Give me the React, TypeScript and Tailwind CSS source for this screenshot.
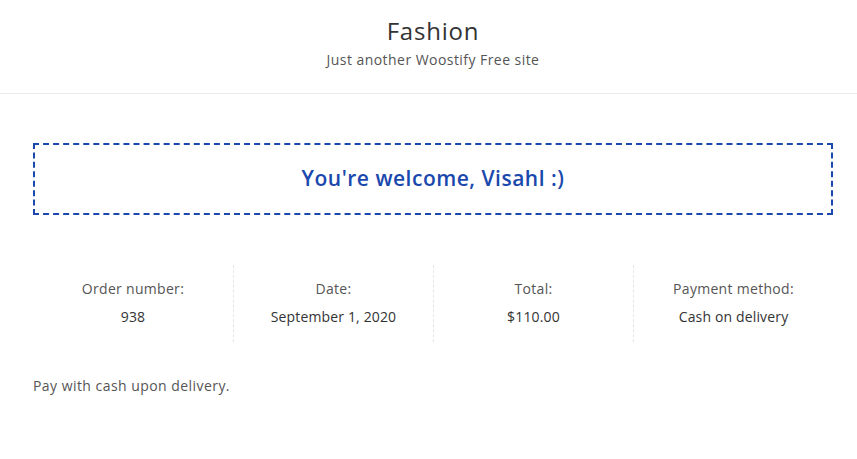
import React from 'react';

const details = [
  { label: 'Order number:', value: '938' },
  { label: 'Date:', value: 'September 1, 2020' },
  { label: 'Total:', value: '$110.00' },
  { label: 'Payment method:', value: 'Cash on delivery' },
];

export default function App() {
  return (
    <div className="min-h-screen bg-white font-['Open_Sans',sans-serif] text-[#333]">
      <header className="border-b border-[#eaeaea] pt-[15px] pb-[22px]">
        <div className="ml-[33px] w-[800px] text-center">
          <h1 className="text-[24px] leading-[32px] tracking-[0.8px] text-[#333]">Fashion</h1>
          <p className="mt-[2px] text-[14px] leading-[22px] tracking-[0.45px] text-[#555]">Just another Woostify Free site</p>
        </div>
      </header>

      <main className="px-[33px] pt-[49px]">
        <div className="flex h-[72px] w-[800px] items-center justify-center border-2 border-dashed border-[#1a48ad]">
          <p className="text-[21px] font-semibold tracking-[0.5px] text-[#1a48ad]">You're welcome, Visahl :)</p>
        </div>

        <ul className="mt-[50px] flex w-[800px]">
          {details.map((d, i) => (
            <li
              key={d.label}
              className={`flex h-[77px] w-[200px] flex-col items-center justify-center pb-[2px] ${i > 0 ? 'border-l border-dashed border-[#e6e6e6]' : ''}`}
            >
              <span className="text-[14px] leading-[20px] tracking-[0.3px] text-[#555]">{d.label}</span>
              <span className="mt-[8px] text-[14px] leading-[20px] tracking-[0.15px] text-[#333]">{d.value}</span>
            </li>
          ))}
        </ul>

        <p className="mt-[33px] text-[14px] leading-[22px] tracking-[0.45px] text-[#555]">Pay with cash upon delivery.</p>
      </main>
    </div>
  );
}
